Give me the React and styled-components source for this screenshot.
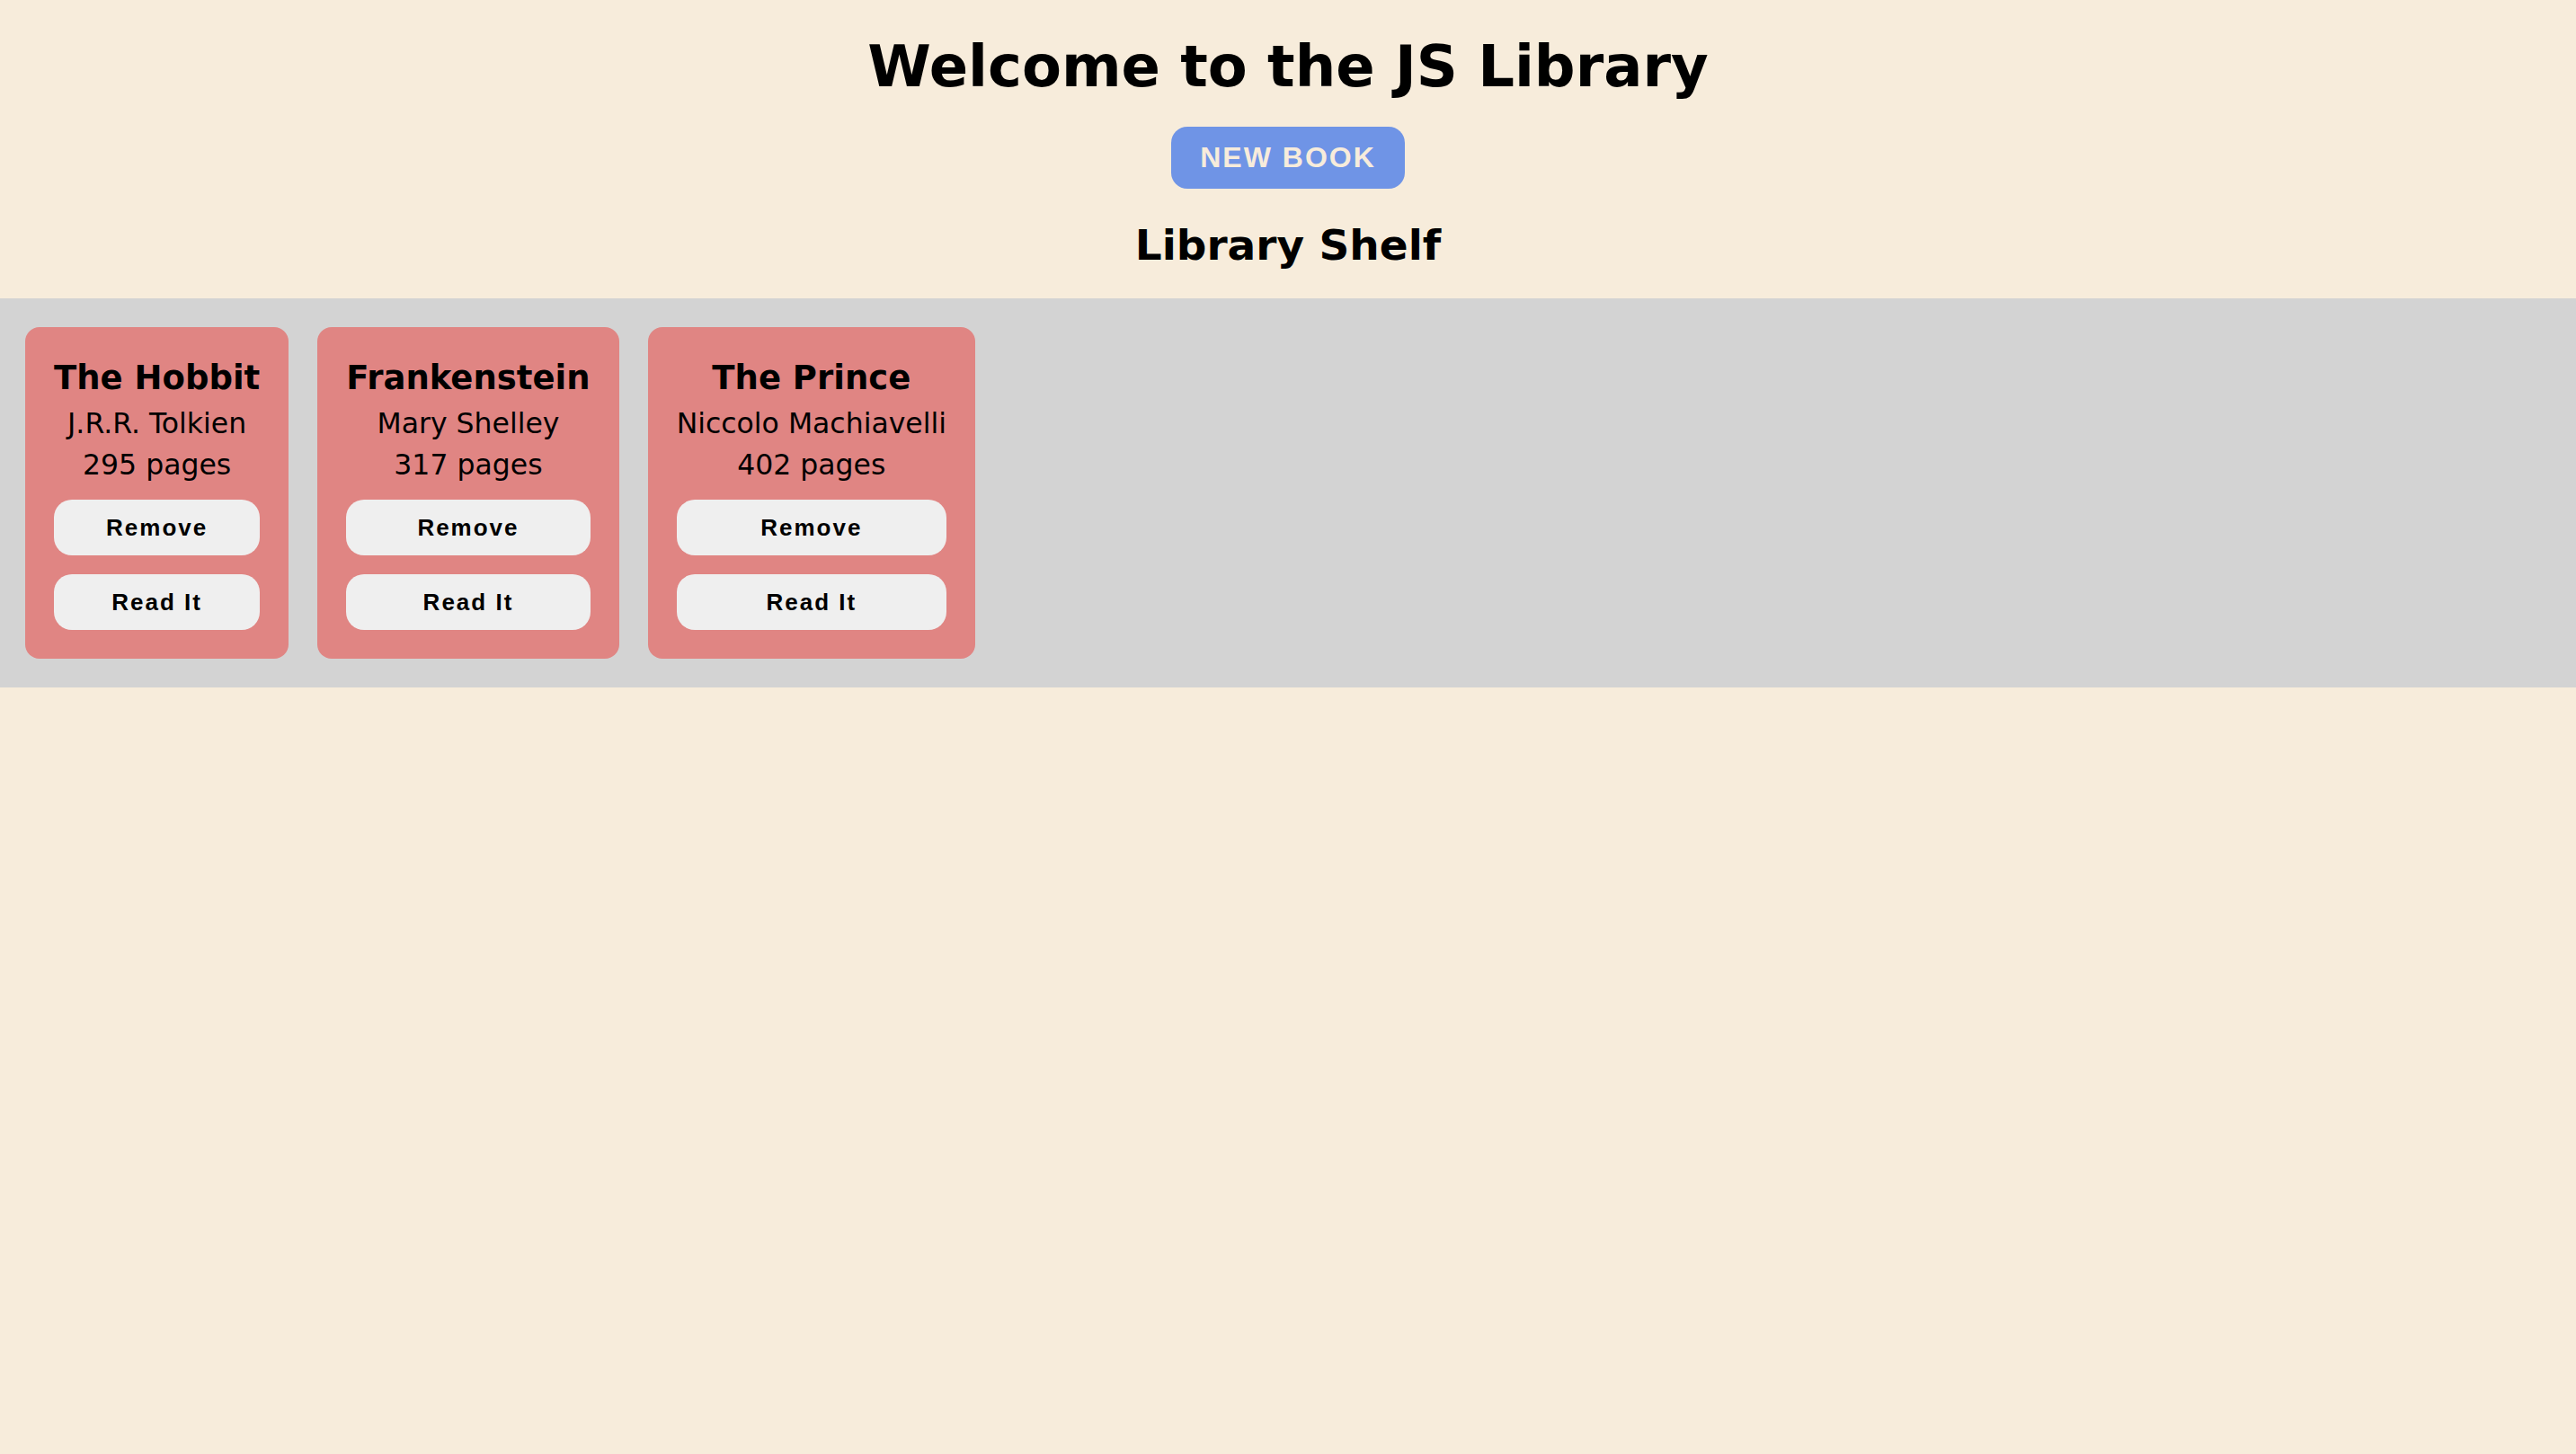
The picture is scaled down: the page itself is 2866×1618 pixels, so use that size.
import React from "react"
import styled, { createGlobalStyle } from "styled-components"

const books = [
  { title: "The Hobbit", author: "J.R.R. Tolkien", pages: 295 },
  { title: "Frankenstein", author: "Mary Shelley", pages: 317 },
  { title: "The Prince", author: "Niccolo Machiavelli", pages: 402 },
]

const GlobalStyle = createGlobalStyle`
  html, body {
    margin: 0;
    padding: 0;
    background-color: #f7ecdb;
    font-family: "DejaVu Sans", Verdana, sans-serif;
    color: #000;
  }
`

const Header = styled.header`
  display: flex;
  flex-direction: column;
  align-items: center;
  padding-top: 36px;
`

const Title = styled.h1`
  margin: 0;
  font-size: 64px;
  line-height: 76px;
  font-weight: bold;
`

const NewBook = styled.button`
  margin-top: 29px;
  padding: 16px 32px;
  border: none;
  border-radius: 18px;
  background-color: #6f94e6;
  color: #f7ecdb;
  font-family: "Liberation Sans", Arial, sans-serif;
  font-weight: bold;
  font-size: 32px;
  line-height: 37px;
  letter-spacing: 2px;
  text-transform: uppercase;
  cursor: pointer;
`

const ShelfTitle = styled.h2`
  margin: 35px 0 32px;
  font-size: 47px;
  line-height: 55px;
  font-weight: bold;
`

const Shelf = styled.section`
  display: flex;
  align-items: flex-start;
  gap: 32px;
  padding: 32px 28px;
  background-color: #d3d3d3;
`

const Card = styled.div`
  display: flex;
  flex-direction: column;
  align-items: stretch;
  padding: 32px;
  border-radius: 16px;
  background-color: #e08583;
  text-align: center;
`

const BookTitle = styled.h3`
  margin: 0 0 2px;
  font-size: 37px;
  line-height: 50px;
  font-weight: bold;
  white-space: nowrap;
`

const Info = styled.p`
  margin: 0;
  font-size: 31.5px;
  line-height: 46px;
  white-space: nowrap;
`

const Actions = styled.div`
  display: flex;
  flex-direction: column;
  gap: 21px;
  margin-top: 16px;
`

const CardButton = styled.button`
  height: 62px;
  border: none;
  border-radius: 20px;
  background-color: #efefef;
  color: #000;
  font-family: "Liberation Sans", Arial, sans-serif;
  font-weight: bold;
  font-size: 26px;
  letter-spacing: 2px;
  cursor: pointer;
`

const App = () => {
  return (
    <>
      <GlobalStyle />
      <Header>
        <Title>Welcome to the JS Library</Title>
        <NewBook>New Book</NewBook>
        <ShelfTitle>Library Shelf</ShelfTitle>
      </Header>
      <Shelf>
        {books.map((book) => (
          <Card key={book.title}>
            <BookTitle>{book.title}</BookTitle>
            <Info>{book.author}</Info>
            <Info>{book.pages} pages</Info>
            <Actions>
              <CardButton>Remove</CardButton>
              <CardButton>Read It</CardButton>
            </Actions>
          </Card>
        ))}
      </Shelf>
    </>
  )
}

export default App
